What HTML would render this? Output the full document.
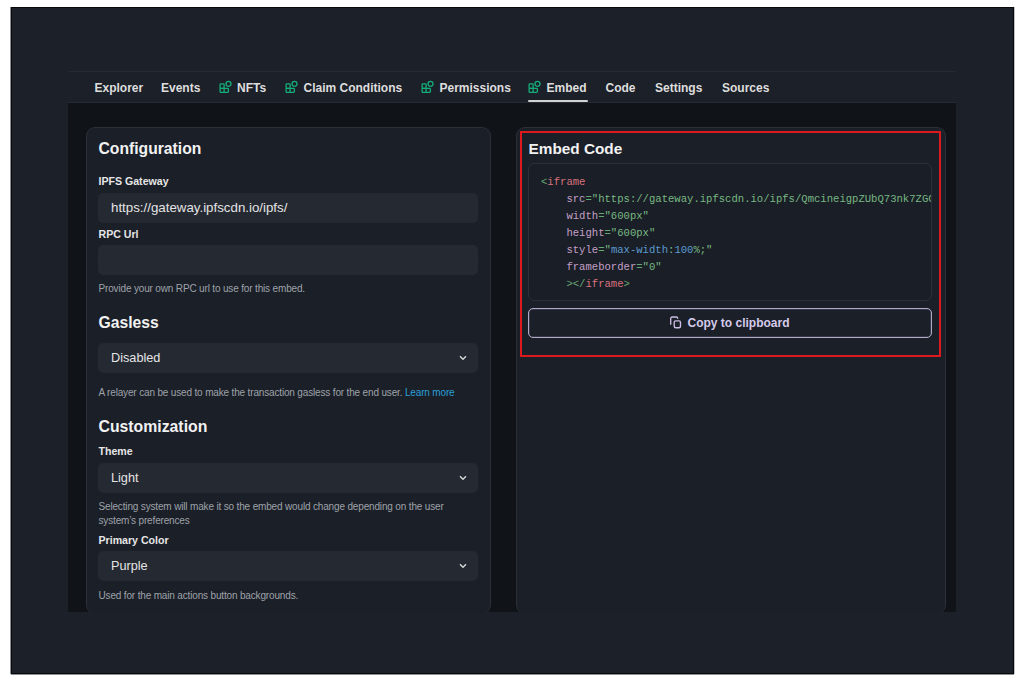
<!DOCTYPE html>
<html><head><meta charset="utf-8"><style>
html,body{margin:0;padding:0;background:#ffffff;width:1024px;height:683px;overflow:hidden;}
.b{position:absolute;box-sizing:border-box;}
.t{position:absolute;white-space:nowrap;font-family:"Liberation Sans", sans-serif;}
.ic{position:absolute;}
</style></head><body>
<div class="b" style="left:11px;top:7px;width:1003px;height:667px;background:#1c2029;border:1px solid #07090c;box-shadow:-1px 0 0 rgba(7,9,12,.45),0 1px 0 rgba(7,9,12,.45),1px 0 0 rgba(7,9,12,.25);"></div>
<div class="b" style="left:68px;top:71px;width:888px;height:1px;background:#262a32;"></div>
<div class="b" style="left:68px;top:102px;width:888px;height:1px;background:#262a32;"></div>
<div class="b" style="left:68px;top:103px;width:888px;height:509px;background:#101318;"></div>
<div class="t" style="left:94.5px;top:81.64px;font-size:12px;line-height:12px;color:#dedede;font-weight:bold;">Explorer</div>
<div class="t" style="left:161px;top:81.64px;font-size:12px;line-height:12px;color:#dedede;font-weight:bold;">Events</div>
<div class="t" style="left:237px;top:81.64px;font-size:12px;line-height:12px;color:#dedede;font-weight:bold;">NFTs</div>
<div class="t" style="left:303.5px;top:81.64px;font-size:12px;line-height:12px;color:#dedede;font-weight:bold;">Claim Conditions</div>
<div class="t" style="left:439.5px;top:81.64px;font-size:12px;line-height:12px;color:#dedede;font-weight:bold;">Permissions</div>
<div class="t" style="left:546.5px;top:81.64px;font-size:12px;line-height:12px;color:#dedede;font-weight:bold;">Embed</div>
<div class="t" style="left:605.5px;top:81.64px;font-size:12px;line-height:12px;color:#dedede;font-weight:bold;">Code</div>
<div class="t" style="left:655px;top:81.64px;font-size:12px;line-height:12px;color:#dedede;font-weight:bold;">Settings</div>
<div class="t" style="left:722px;top:81.64px;font-size:12px;line-height:12px;color:#dedede;font-weight:bold;">Sources</div>
<div class="b" style="left:528px;top:100px;width:59.5px;height:2px;background:#d2d2d2;border-radius:1px;"></div>
<svg class="ic" style="left:217.5px;top:78px" width="16" height="16" viewBox="0 0 16 16"><g fill="none" stroke="#15ad78" stroke-width="1.3"><rect x="2.1" y="5.8" width="4.0" height="4.6" rx="0.8"/><rect x="2.1" y="10.4" width="8.3" height="4.0" rx="0.8"/><line x1="6.1" y1="10.4" x2="6.1" y2="14.4"/><circle cx="10.5" cy="5.8" r="2.5"/></g></svg>
<svg class="ic" style="left:283.5px;top:78px" width="16" height="16" viewBox="0 0 16 16"><g fill="none" stroke="#15ad78" stroke-width="1.3"><rect x="2.1" y="5.8" width="4.0" height="4.6" rx="0.8"/><rect x="2.1" y="10.4" width="8.3" height="4.0" rx="0.8"/><line x1="6.1" y1="10.4" x2="6.1" y2="14.4"/><circle cx="10.5" cy="5.8" r="2.5"/></g></svg>
<svg class="ic" style="left:419.5px;top:78px" width="16" height="16" viewBox="0 0 16 16"><g fill="none" stroke="#15ad78" stroke-width="1.3"><rect x="2.1" y="5.8" width="4.0" height="4.6" rx="0.8"/><rect x="2.1" y="10.4" width="8.3" height="4.0" rx="0.8"/><line x1="6.1" y1="10.4" x2="6.1" y2="14.4"/><circle cx="10.5" cy="5.8" r="2.5"/></g></svg>
<svg class="ic" style="left:526.5px;top:78px" width="16" height="16" viewBox="0 0 16 16"><g fill="none" stroke="#15ad78" stroke-width="1.3"><rect x="2.1" y="5.8" width="4.0" height="4.6" rx="0.8"/><rect x="2.1" y="10.4" width="8.3" height="4.0" rx="0.8"/><line x1="6.1" y1="10.4" x2="6.1" y2="14.4"/><circle cx="10.5" cy="5.8" r="2.5"/></g></svg>
<div class="b" style="left:86px;top:127px;width:405px;height:487px;background:#1b1f28;border:1px solid #2b2f38;border-bottom:0;border-radius:9px;"></div>
<div class="b" style="left:516px;top:127px;width:430px;height:487px;background:#1b1f28;border:1px solid #2b2f38;border-bottom:0;border-radius:9px;"></div>
<div class="t" style="left:98.5px;top:140.71px;font-size:15.7px;line-height:15.7px;color:#f2f2f2;font-weight:bold;">Configuration</div>
<div class="t" style="left:98.5px;top:175.63px;font-size:10.6px;line-height:10.6px;color:#e6e6e6;font-weight:bold;">IPFS Gateway</div>
<div class="b" style="left:98px;top:192.5px;width:380px;height:30.0px;background:#252932;border-radius:5px;"></div>
<div class="t" style="left:111px;top:201.24px;font-size:13.3px;line-height:13.3px;color:#e4e4e4;font-weight:normal;">https://gateway.ipfscdn.io/ipfs/</div>
<div class="t" style="left:98.5px;top:228.63px;font-size:10.6px;line-height:10.6px;color:#e6e6e6;font-weight:bold;">RPC Url</div>
<div class="b" style="left:98px;top:245px;width:380px;height:30px;background:#252932;border-radius:5px;"></div>
<div class="t" style="left:98.5px;top:283.94px;font-size:10px;line-height:10px;color:#9ea2a9;font-weight:normal;letter-spacing:-0.16px;">Provide your own RPC url to use for this embed.</div>
<div class="t" style="left:98.5px;top:314.51px;font-size:15.7px;line-height:15.7px;color:#f2f2f2;font-weight:bold;">Gasless</div>
<div class="b" style="left:98px;top:343px;width:380px;height:30px;background:#252932;border-radius:5px;"></div>
<div class="t" style="left:111px;top:351.85px;font-size:12.7px;line-height:12.7px;color:#e4e4e4;font-weight:normal;">Disabled</div>
<svg class="ic" style="left:459px;top:354.7px" width="8" height="6" viewBox="0 0 8 6"><path d="M1 1.2 L4 4.2 L7 1.2" fill="none" stroke="#d8d8d8" stroke-width="1.4"/></svg>
<div class="t" style="left:98.5px;top:388.34px;font-size:10px;line-height:10px;color:#9ea2a9;font-weight:normal;letter-spacing:-0.16px;">A relayer can be used to make the transaction gasless for the end user. <span style="color:#2a9fd8">Learn more</span></div>
<div class="t" style="left:98.5px;top:418.63px;font-size:15.8px;line-height:15.8px;color:#f2f2f2;font-weight:bold;">Customization</div>
<div class="t" style="left:98.5px;top:446.33px;font-size:10.6px;line-height:10.6px;color:#e6e6e6;font-weight:bold;">Theme</div>
<div class="b" style="left:98px;top:463px;width:380px;height:30px;background:#252932;border-radius:5px;"></div>
<div class="t" style="left:111px;top:471.85px;font-size:12.7px;line-height:12.7px;color:#e4e4e4;font-weight:normal;">Light</div>
<svg class="ic" style="left:459px;top:474.7px" width="8" height="6" viewBox="0 0 8 6"><path d="M1 1.2 L4 4.2 L7 1.2" fill="none" stroke="#d8d8d8" stroke-width="1.4"/></svg>
<div class="t" style="left:98.5px;top:501.94px;font-size:10px;line-height:10px;color:#9ea2a9;font-weight:normal;letter-spacing:-0.16px;">Selecting system will make it so the embed would change depending on the user</div>
<div class="t" style="left:98.5px;top:516.33px;font-size:10px;line-height:10px;color:#9ea2a9;font-weight:normal;letter-spacing:-0.16px;">system’s preferences</div>
<div class="t" style="left:98.5px;top:534.83px;font-size:10.6px;line-height:10.6px;color:#e6e6e6;font-weight:bold;">Primary Color</div>
<div class="b" style="left:98px;top:551px;width:380px;height:30px;background:#252932;border-radius:5px;"></div>
<div class="t" style="left:111px;top:559.85px;font-size:12.7px;line-height:12.7px;color:#e4e4e4;font-weight:normal;">Purple</div>
<svg class="ic" style="left:459px;top:562.7px" width="8" height="6" viewBox="0 0 8 6"><path d="M1 1.2 L4 4.2 L7 1.2" fill="none" stroke="#d8d8d8" stroke-width="1.4"/></svg>
<div class="t" style="left:98.5px;top:591.33px;font-size:10px;line-height:10px;color:#9ea2a9;font-weight:normal;letter-spacing:-0.16px;">Used for the main actions button backgrounds.</div>
<div class="t" style="left:528.5px;top:141.11px;font-size:15.35px;line-height:15.35px;color:#f2f2f2;font-weight:bold;">Embed Code</div>
<div class="b" style="left:528px;top:163px;width:404px;height:138px;border:1px solid #2c3039;border-radius:6px;background:#1a1e26;overflow:hidden">
<div class="t" style="left:12.00px;top:13.01px;font-family:'Liberation Mono', monospace;font-size:10.58px;line-height:10.58px;white-space:pre"><span style="color:#66a874">&lt;</span><span style="color:#d9727e">iframe</span></div>
<div class="t" style="left:12.00px;top:30.01px;font-family:'Liberation Mono', monospace;font-size:10.58px;line-height:10.58px;white-space:pre">    <span style="color:#c4a0c6">src</span><span style="color:#66a874">=</span><span style="color:#78b884">"https://gateway.ipfscdn.io/ipfs/QmcineigpZUbQ73nk7ZGCjCoNmJxH8oXWzGFfXoG4dNwE1/erc721.html?contract=0x"</span></div>
<div class="t" style="left:12.00px;top:47.01px;font-family:'Liberation Mono', monospace;font-size:10.58px;line-height:10.58px;white-space:pre">    <span style="color:#c4a0c6">width</span><span style="color:#66a874">=</span><span style="color:#78b884">"600px"</span></div>
<div class="t" style="left:12.00px;top:64.01px;font-family:'Liberation Mono', monospace;font-size:10.58px;line-height:10.58px;white-space:pre">    <span style="color:#c4a0c6">height</span><span style="color:#66a874">=</span><span style="color:#78b884">"600px"</span></div>
<div class="t" style="left:12.00px;top:81.01px;font-family:'Liberation Mono', monospace;font-size:10.58px;line-height:10.58px;white-space:pre">    <span style="color:#c4a0c6">style</span><span style="color:#66a874">=</span><span style="color:#78b884">"</span><span style="color:#5b9bd0">max-width</span><span style="color:#78b884">:</span><span style="color:#5b9bd0">100</span><span style="color:#78b884">%;"</span></div>
<div class="t" style="left:12.00px;top:98.01px;font-family:'Liberation Mono', monospace;font-size:10.58px;line-height:10.58px;white-space:pre">    <span style="color:#c4a0c6">frameborder</span><span style="color:#66a874">=</span><span style="color:#78b884">"0"</span></div>
<div class="t" style="left:12.00px;top:115.01px;font-family:'Liberation Mono', monospace;font-size:10.58px;line-height:10.58px;white-space:pre">    <span style="color:#66a874">&gt;&lt;/</span><span style="color:#d9727e">iframe</span><span style="color:#66a874">&gt;</span></div>
</div>
<div class="b" style="left:528px;top:308px;width:404px;height:29.5px;border:1px solid #b2a8c8;border-radius:5px;box-shadow:inset 0 0 0 0.5px rgba(178,168,200,.35);"></div>
<svg class="ic" style="left:668px;top:314px" width="16" height="16" viewBox="0 0 16 16"><g fill="none" stroke="#cbbde3" stroke-width="1.35" stroke-linecap="round"><path d="M2.7 10.3 V4.5 A1.5 1.5 0 0 1 4.2 3 H8.3 A1.4 1.4 0 0 1 9.7 4.3"/><rect x="6.2" y="6.9" width="6.3" height="6.8" rx="1.5"/></g></svg>
<div class="t" style="left:687.5px;top:317.34px;font-size:12px;line-height:12px;color:#d6cbec;font-weight:bold;">Copy to clipboard</div>
<div class="b" style="left:520px;top:131px;width:421px;height:226px;border:2px solid #dc1a1e;"></div>
</body></html>
